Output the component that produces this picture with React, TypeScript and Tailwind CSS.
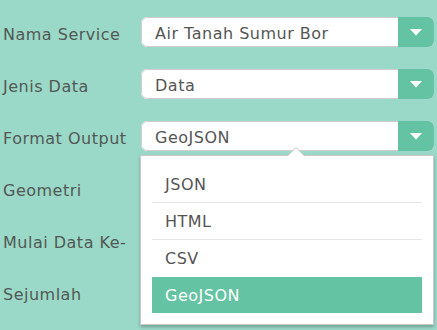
const rows = [
  { label: "Nama Service", value: "Air Tanah Sumur Bor" },
  { label: "Jenis Data", value: "Data" },
  { label: "Format Output", value: "GeoJSON" },
  { label: "Geometri", value: "" },
  { label: "Mulai Data Ke-", value: "" },
  { label: "Sejumlah", value: "" },
]

const options = ["JSON", "HTML", "CSV", "GeoJSON"]

function SelectBox({ value }: { value: string }) {
  return (
    <div className="flex h-[30px] flex-1 overflow-hidden rounded-[6px] bg-white">
      <div className="flex flex-1 items-center border border-r-0 border-[#cfcfcf] rounded-l-[6px] pl-[13px] pt-[3px] text-[16px] tracking-[0.5px] text-[#555]">
        {value}
      </div>
      <div className="flex w-[36px] items-center justify-center bg-[#64c3a3]">
        <svg width="12" height="7" viewBox="0 0 12 7">
          <path d="M0 0 L12 0 L6 6.5 Z" fill="#fff" />
        </svg>
      </div>
    </div>
  )
}

export default function App() {
  return (
    <div
      className="relative h-[330px] w-[437px] overflow-hidden bg-[#9ad8c7]"
      style={{ fontFamily: "'DejaVu Sans', Verdana, sans-serif" }}
    >
      <div className="flex flex-col gap-[22px] pl-[3px] pr-[3px] pt-[17px]">
        {rows.map((row) => (
          <div key={row.label} className="flex items-center">
            <div className="w-[138px] pt-[5px] text-[16px] tracking-[0.5px] text-[#525855]">{row.label}</div>
            <SelectBox value={row.value} />
          </div>
        ))}
      </div>

      {/* open dropdown for Format Output */}
      <div className="absolute left-[140px] top-[155px] w-[294px] border border-[#c8c8c8] bg-white px-[11px] pb-[11px] pt-[10px] shadow-[0_2px_3px_rgba(0,0,0,0.25)]">
        <svg className="absolute left-[146px] top-[-9px]" width="18" height="10" viewBox="0 0 18 10">
          <path d="M0 9.5 L9 0.5 L18 9.5" fill="#fff" stroke="#c8c8c8" strokeWidth="1" />
        </svg>
        {options.map((opt, i) => (
          <div
            key={opt}
            className={
              opt === "GeoJSON"
                ? "flex h-[36px] items-center bg-[#64c3a3] pl-[13px] pt-[1px] text-[16px] tracking-[0.5px] text-white"
                : "flex h-[37px] items-center border-b border-[#e6e6e6] pl-[13px] pt-[1px] text-[16px] tracking-[0.5px] text-[#555]" +
                  (i === 2 ? " border-b-0" : "")
            }
          >
            {opt}
          </div>
        ))}
      </div>
    </div>
  )
}
